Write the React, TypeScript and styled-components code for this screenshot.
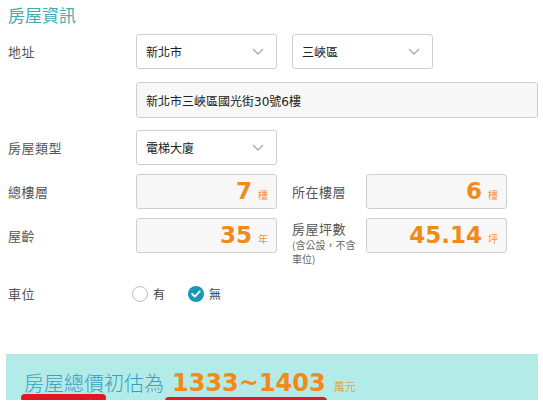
import React from "react";
import styled, { createGlobalStyle } from "styled-components";

const GlobalStyle = createGlobalStyle`
  html, body {
    margin: 0;
    padding: 0;
    background: #ffffff;
  }
  body {
    font-family: "DejaVu Sans", "Noto Sans CJK TC", sans-serif;
    color: #444;
  }
`;

const Page = styled.div`
  width: 543px;
  padding: 3px 5px 0 0;
  box-sizing: border-box;
`;

const Title = styled.h2`
  margin: 0 0 7px 8px;
  font-family: "Noto Sans CJK TC", sans-serif;
  font-size: 17px;
  line-height: 24px;
  font-weight: 400;
  color: #3fadb0;
`;

const Row = styled.div<{ $mt?: number; $align?: string }>`
  display: grid;
  grid-template-columns: 128px 1fr;
  align-items: ${(p) => p.$align || "center"};
  margin-top: ${(p) => p.$mt || 0}px;
  padding-left: 8px;
`;

const Label = styled.div<{ $boxed?: boolean }>`
  font-family: "Noto Sans CJK TC", sans-serif;
  font-size: 13px;
  letter-spacing: 0.5px;
  color: #555;
  ${(p) => (p.$boxed ? "height: 35px; display: flex; align-items: center;" : "")}
`;

const Fields = styled.div<{ $gap?: number; $align?: string }>`
  display: flex;
  align-items: ${(p) => p.$align || "center"};
  gap: ${(p) => p.$gap ?? 15}px;
`;

const Select = styled.div<{ $w?: number }>`
  width: ${(p) => p.$w || 141}px;
  height: 35px;
  box-sizing: border-box;
  border: 1px solid #cfcfcf;
  border-radius: 3px;
  background: #fff;
  display: flex;
  align-items: center;
  justify-content: space-between;
  padding: 0 12px 0 9px;
  font-family: "Noto Sans CJK TC", sans-serif;
  font-size: 12px;
  color: #222;
`;

const TextBox = styled.div<{ $w?: number }>`
  width: ${(p) => p.$w || 402}px;
  height: 36px;
  box-sizing: border-box;
  border: 1px solid #cfcfcf;
  border-radius: 3px;
  background: #f7f7f7;
  display: flex;
  align-items: center;
  padding: 0 9px;
  font-size: 12px;
  color: #222;
`;

const NumberBox = styled.div`
  width: 141px;
  height: 35px;
  box-sizing: border-box;
  border: 1px solid #cfcfcf;
  border-radius: 3px;
  background: #f7f7f7;
  display: flex;
  align-items: baseline;
  justify-content: flex-end;
  gap: 6px;
  padding: 0 8px 0 8px;
  color: #f08a1a;
`;

const Value = styled.span`
  font-family: "DejaVu Sans", sans-serif;
  font-weight: 700;
  font-size: 23px;
  line-height: 33px;
`;

const Unit = styled.span`
  font-family: "Noto Sans CJK TC", sans-serif;
  font-size: 10px;
  color: #f0953a;
`;

const Pair = styled.div<{ $align?: string }>`
  display: flex;
  align-items: ${(p) => p.$align || "center"};
`;

const SideLabel = styled.div`
  width: 74px;
  font-family: "Noto Sans CJK TC", sans-serif;
  font-size: 13px;
  letter-spacing: 0.5px;
  color: #555;
`;

const SideLabelTop = styled(SideLabel)`
  padding-top: 1px;
  line-height: 19px;
`;

const Note = styled.div`
  width: 68px;
  font-size: 10px;
  line-height: 14px;
  letter-spacing: 0;
  color: #666;
`;

const RadioGroup = styled.div`
  display: flex;
  align-items: center;
  gap: 23px;
  margin-left: -4px;
`;

const RadioItem = styled.label`
  display: flex;
  align-items: center;
  gap: 5px;
  font-family: "Noto Sans CJK TC", sans-serif;
  font-size: 12px;
  color: #444;
`;

const Circle = styled.span<{ $on?: boolean }>`
  width: 16px;
  height: 16px;
  box-sizing: border-box;
  border-radius: 50%;
  border: ${(p) => (p.$on ? "none" : "1px solid #bcbcbc")};
  background: ${(p) => (p.$on ? "#1798b4" : "#fff")};
  display: flex;
  align-items: center;
  justify-content: center;
`;

const Banner = styled.div`
  margin: 51px 0 0 6px;
  height: 46px;
  background: #b3ebe8;
  padding: 17px 0 0 18px;
  box-sizing: border-box;
  position: relative;
`;

const Estimate = styled.div`
  display: flex;
  align-items: baseline;
  height: 24px;
`;

const Marked = styled.span<{ $left: number; $width: number }>`
  position: relative;
  &::after {
    content: "";
    position: absolute;
    z-index: 2;
    left: ${(p) => p.$left}px;
    width: ${(p) => p.$width}px;
    top: 26px;
    height: 8px;
    border-radius: 4px;
    background: #e0181f;
  }
`;

const Lead = styled.span`
  font-family: "Noto Sans CJK TC", sans-serif;
  font-size: 20px;
  line-height: 24px;
  color: #3a9ec4;
  font-weight: 300;
`;

const Total = styled.span`
  font-family: "DejaVu Sans", sans-serif;
  font-weight: 700;
  font-size: 24px;
  line-height: 24px;
  color: #f08a1a;
  margin-left: 8px;
`;

const Wan = styled.span`
  font-family: "Noto Sans CJK TC", sans-serif;
  font-size: 11px;
  color: #e4a24c;
  margin-left: 8px;
`;

const Chevron = () => (
  <svg width="12" height="7" viewBox="0 0 12 7" fill="none">
    <path d="M1 1l5 5 5-5" stroke="#a9a9a9" strokeWidth="1.3" />
  </svg>
);

const Check = () => (
  <svg width="10" height="8" viewBox="0 0 10 8" fill="none">
    <path d="M1.2 4l2.6 2.6L8.8 1.4" stroke="#fff" strokeWidth="1.8" strokeLinecap="round" strokeLinejoin="round" />
  </svg>
);

export default function App() {
  return (
    <Page>
      <GlobalStyle />
      <Title>房屋資訊</Title>

      <Row>
        <Label>地址</Label>
        <Fields>
          <Select>
            新北市
            <Chevron />
          </Select>
          <Select>
            三峽區
            <Chevron />
          </Select>
        </Fields>
      </Row>

      <Row $mt={13}>
        <span />
        <TextBox>新北市三峽區國光街30號6樓</TextBox>
      </Row>

      <Row $mt={12}>
        <Label>房屋類型</Label>
        <Fields>
          <Select>
            電梯大廈
            <Chevron />
          </Select>
        </Fields>
      </Row>

      <Row $mt={9}>
        <Label>總樓層</Label>
        <Fields>
          <NumberBox>
            <Value>7</Value>
            <Unit>樓</Unit>
          </NumberBox>
          <Pair>
            <SideLabel>所在樓層</SideLabel>
            <NumberBox>
              <Value>6</Value>
              <Unit>樓</Unit>
            </NumberBox>
          </Pair>
        </Fields>
      </Row>

      <Row $mt={9} $align="start">
        <Label $boxed>屋齡</Label>
        <Fields $align="flex-start">
          <NumberBox>
            <Value>35</Value>
            <Unit>年</Unit>
          </NumberBox>
          <Pair $align="flex-start">
            <SideLabelTop>
              房屋坪數
              <Note>(含公設，不含車位)</Note>
            </SideLabelTop>
            <NumberBox>
              <Value>45.14</Value>
              <Unit>坪</Unit>
            </NumberBox>
          </Pair>
        </Fields>
      </Row>

      <Row $mt={18}>
        <Label>車位</Label>
        <RadioGroup>
          <RadioItem>
            <Circle />
            有
          </RadioItem>
          <RadioItem>
            <Circle $on>
              <Check />
            </Circle>
            無
          </RadioItem>
        </RadioGroup>
      </Row>

      <Banner>
        <Estimate>
          <Lead>
            <Marked $left={-3} $width={85}>房屋總價</Marked>初估為
          </Lead>
          <Marked $left={1} $width={162}>
            <Total>1333~1403</Total>
          </Marked>
          <Wan>萬元</Wan>
        </Estimate>
      </Banner>
    </Page>
  );
}
